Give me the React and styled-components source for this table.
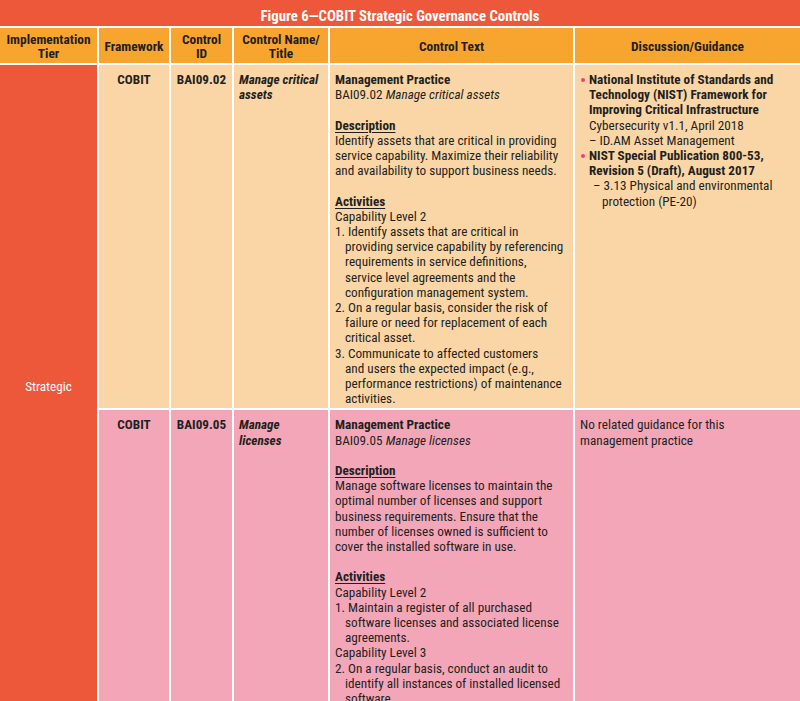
import React from 'react';
import styled, { createGlobalStyle } from 'styled-components';

const GlobalStyle = createGlobalStyle`
  html, body { margin: 0; padding: 0; background: #ffffff; }
  body {
    font-family: "Roboto Condensed", "Liberation Sans Narrow", "DejaVu Sans Condensed", Roboto, sans-serif;
    color: #231f20;
    font-size: 13.2px;
    line-height: 15.2px;
  }
`;

const Page = styled.div`
  width: 800px;
  background: #ffffff;
`;

const TitleBar = styled.div`
  height: 26px;
  background: #ee583a;
  color: #ffffff;
  font-weight: 700;
  font-size: 14.8px;
  display: flex;
  align-items: center;
  justify-content: center;
  padding-top: 7px;
  box-sizing: border-box;
`;

const Grid = styled.div`
  display: grid;
  grid-template-columns: 97px 70px 61px 94px 243px 1fr;
  grid-template-rows: 35px auto auto;
  gap: 2px;
  padding-top: 2px;
  background: #ffffff;
`;

const HeadCell = styled.div`
  background: #f8a530;
  font-weight: 700;
  font-size: 13.4px;
  display: flex;
  align-items: center;
  justify-content: center;
  text-align: center;
  line-height: 14.5px;
  padding-top: 3px;
`;

const TierCell = styled.div`
  grid-row: 2 / span 2;
  background: #ee583a;
  color: #ffffff;
  display: flex;
  align-items: center;
  justify-content: center;
`;

const Cell = styled.div`
  background: ${p => (p.$tone === 'pink' ? '#f4a6b9' : '#fad6a6')};
  padding: 7px 5px 2px;
  text-align: ${p => (p.$center ? 'center' : 'left')};
  font-weight: ${p => (p.$bold ? 700 : 400)};
  font-style: ${p => (p.$italic ? 'italic' : 'normal')};
  white-space: nowrap;
`;

const Block = styled.div`
  & + & { margin-top: 15.2px; }
`;

const Bold = styled.div`
  font-weight: 700;
`;

const Heading = styled.div`
  font-weight: 700;
  text-decoration: underline;
  text-underline-offset: 2px;
`;

const Numbered = styled.div`
  padding-left: 10px;
  text-indent: -10px;
`;

const Bullet = styled.div`
  position: relative;
  padding-left: 9px;
  &::before {
    content: '';
    position: absolute;
    left: 1px;
    top: 6px;
    width: 4px;
    height: 4px;
    border-radius: 50%;
    background: #e6457c;
  }
`;

const SubItem = styled.div`
  padding-left: ${p => (p.$deep ? '13px' : '0')};
  text-indent: ${p => (p.$deep ? '-9px' : '0')};
`;

export default function App() {
  return (
    <Page>
      <GlobalStyle />
      <TitleBar>Figure 6—COBIT Strategic Governance Controls</TitleBar>
      <Grid>
        <HeadCell>Implementation<br />Tier</HeadCell>
        <HeadCell>Framework</HeadCell>
        <HeadCell>Control<br />ID</HeadCell>
        <HeadCell>Control Name/<br />Title</HeadCell>
        <HeadCell>Control Text</HeadCell>
        <HeadCell>Discussion/Guidance</HeadCell>

        <TierCell>Strategic</TierCell>

        <Cell $bold $center>COBIT</Cell>
        <Cell $bold $center>BAI09.02</Cell>
        <Cell $bold $italic>Manage critical<br />assets</Cell>
        <Cell>
          <Block>
            <Bold>Management Practice</Bold>
            <div>BAI09.02 <i>Manage critical assets</i></div>
          </Block>
          <Block>
            <Heading>Description</Heading>
            <div>
              Identify assets that are critical in providing<br />
              service capability. Maximize their reliability<br />
              and availability to support business needs.
            </div>
          </Block>
          <Block>
            <Heading>Activities</Heading>
            <div>Capability Level 2</div>
            <Numbered>
              1. Identify assets that are critical in<br />
              providing service capability by referencing<br />
              requirements in service definitions,<br />
              service level agreements and the<br />
              configuration management system.
            </Numbered>
            <Numbered>
              2. On a regular basis, consider the risk of<br />
              failure or need for replacement of each<br />
              critical asset.
            </Numbered>
            <Numbered>
              3. Communicate to affected customers<br />
              and users the expected impact (e.g.,<br />
              performance restrictions) of maintenance<br />
              activities.
            </Numbered>
          </Block>
        </Cell>
        <Cell>
          <Bullet>
            <Bold>
              National Institute of Standards and<br />
              Technology (NIST) Framework for<br />
              Improving Critical Infrastructure
            </Bold>
            <div>Cybersecurity v1.1, April 2018</div>
            <SubItem>– ID.AM Asset Management</SubItem>
          </Bullet>
          <Bullet>
            <Bold>
              NIST Special Publication 800-53,<br />
              Revision 5 (Draft), August 2017
            </Bold>
            <SubItem $deep>
              – 3.13 Physical and environmental<br />
              protection (PE-20)
            </SubItem>
          </Bullet>
        </Cell>

        <Cell $tone="pink" $bold $center>COBIT</Cell>
        <Cell $tone="pink" $bold $center>BAI09.05</Cell>
        <Cell $tone="pink" $bold $italic>Manage<br />licenses</Cell>
        <Cell $tone="pink">
          <Block>
            <Bold>Management Practice</Bold>
            <div>BAI09.05 <i>Manage licenses</i></div>
          </Block>
          <Block>
            <Heading>Description</Heading>
            <div>
              Manage software licenses to maintain the<br />
              optimal number of licenses and support<br />
              business requirements. Ensure that the<br />
              number of licenses owned is sufficient to<br />
              cover the installed software in use.
            </div>
          </Block>
          <Block>
            <Heading>Activities</Heading>
            <div>Capability Level 2</div>
            <Numbered>
              1. Maintain a register of all purchased<br />
              software licenses and associated license<br />
              agreements.
            </Numbered>
            <div>Capability Level 3</div>
            <Numbered>
              2. On a regular basis, conduct an audit to<br />
              identify all instances of installed licensed<br />
              software.
            </Numbered>
          </Block>
        </Cell>
        <Cell $tone="pink">
          No related guidance for this<br />
          management practice
        </Cell>
      </Grid>
    </Page>
  );
}
